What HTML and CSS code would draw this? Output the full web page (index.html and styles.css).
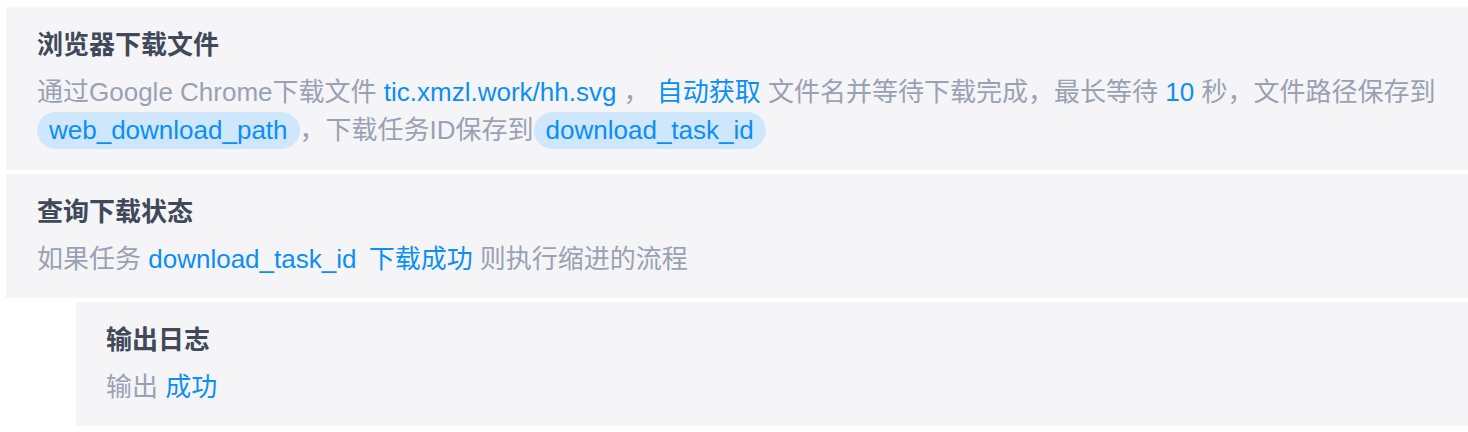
FILE: index.html
```html
<!DOCTYPE html>
<html lang="zh-CN">
<head>
    <meta charset="UTF-8">
    <meta name="viewport" content="width=device-width, initial-scale=1.0">
    <title>流程步骤</title>
    <link rel="stylesheet" href="styles.css">
</head>
<body>
<div class="flow">
    <div class="step">
        <div class="step-title">浏览器下载文件</div>
        <div class="step-desc">通过Google Chrome下载文件 <span class="val">tic.xmzl.work/hh.svg</span> ， <span class="val">自动获取</span> 文件名并等待下载完成，最长等待 <span class="val">10</span> 秒，文件路径保存到<br><span class="var">web_download_path</span>，下载任务ID保存到<span class="var">download_task_id</span></div>
    </div>
    <div class="step">
        <div class="step-title">查询下载状态</div>
        <div class="step-desc">如果任务 <span class="val">download_task_id</span> <span class="val status">下载成功</span> 则执行缩进的流程</div>
    </div>
    <div class="step indent">
        <div class="step-title">输出日志</div>
        <div class="step-desc">输出 <span class="val">成功</span></div>
    </div>
</div>
</body>
</html>
```

FILE: styles.css
```css
body {
    margin: 7px 0 0 6px;
    background-color: #fff;
    font-family: "Liberation Sans", "Noto Sans CJK SC", sans-serif;
}

.flow {
    display: flex;
    flex-direction: column;
    gap: 4px;
}

.step {
    background-color: #f5f5f7;
    padding: 20px 20px 20px 31px;
}

.step.indent {
    margin-left: 70px;
    padding-left: 30px;
}

.step-title {
    font-size: 26px;
    line-height: 37px;
    font-weight: bold;
    color: #404859;
    margin-bottom: 10px;
}

.step-desc {
    font-size: 26px;
    line-height: 37px;
    color: #99a1b3;
}

.val {
    color: #0b8ef8;
}

.val.status {
    margin-left: 5px;
}

.var {
    display: inline-block;
    color: #0b8ef8;
    background-color: #cfe7fc;
    border-radius: 19px;
    padding: 0 12px;
    margin: 1px 0;
    line-height: 37px;
}
```
